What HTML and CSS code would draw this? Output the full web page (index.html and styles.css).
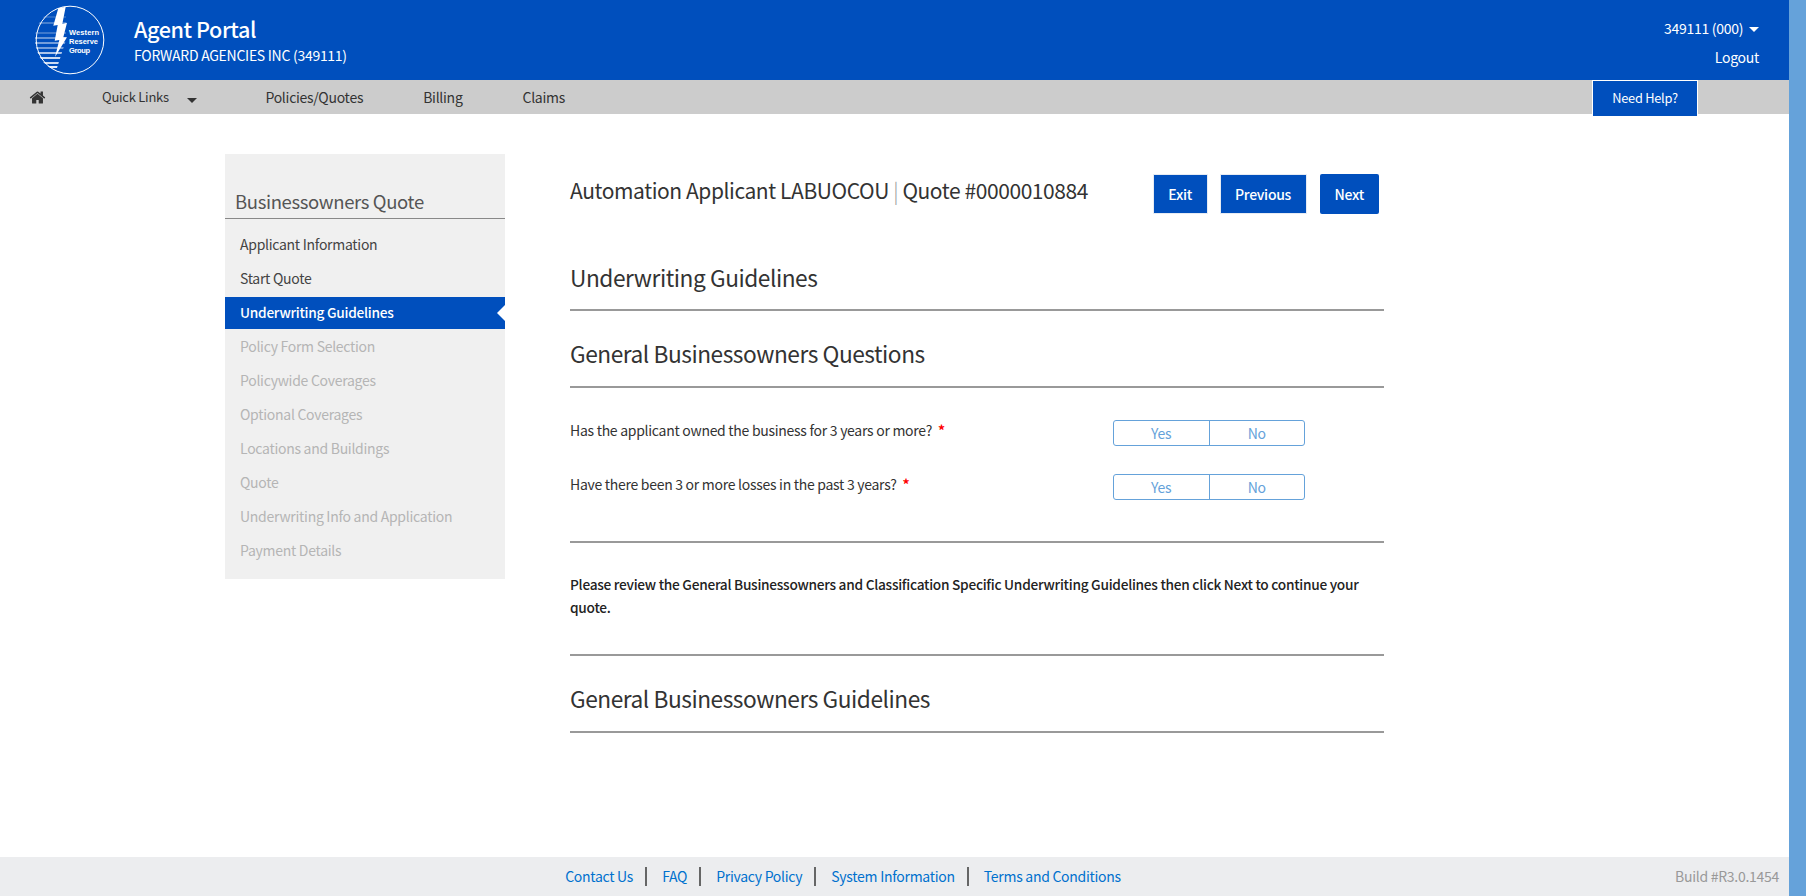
FILE: index.html
```html
<!DOCTYPE html>
<html>
	<head>
		<title>Agent Portal</title>
		<link rel="stylesheet" href="styles.css">
	</head>
	<body>
	<div class="pageMain">
		<div class="topBar">
			<svg class="logo" viewBox="0 0 70 70" width="70" height="70">
				<defs>
					<clipPath id="logoLeft"><path d="M28 1 A34 34 0 0 0 21 66 L31 35 L31 1 Z" /></clipPath>
				</defs>
				<g clip-path="url(#logoLeft)" stroke="#fff">
					<line x1="0" y1="12" x2="40" y2="12" stroke-width=".6" stroke-opacity=".5" />
					<line x1="0" y1="18" x2="40" y2="18" stroke-width=".8" stroke-opacity=".7" />
					<line x1="0" y1="28" x2="40" y2="28" stroke-width=".8" stroke-opacity=".6" />
					<line x1="0" y1="33" x2="40" y2="33" stroke-width="1" stroke-opacity=".8" />
					<line x1="0" y1="38" x2="40" y2="38" stroke-width="1" stroke-opacity=".9" />
					<line x1="0" y1="43" x2="40" y2="43" stroke-width="1.200" stroke-opacity=".9" />
					<line x1="0" y1="48" x2="40" y2="48" stroke-width="1.400" stroke-opacity=".9" />
					<line x1="0" y1="53" x2="40" y2="53" stroke-width="1.800" stroke-opacity=".8" />
					<line x1="0" y1="58" x2="40" y2="58" stroke-width="2" stroke-opacity=".8" />
					<line x1="0" y1="62" x2="40" y2="62" stroke-width="2.200" stroke-opacity=".9" />
				</g>
				<circle cx="35" cy="35" r="33.800" fill="none" stroke="#fff" stroke-width="1" />
				<path d="M23.300 3.300 L30.700 1.700 L27.300 19 L32 17.700 L28.300 32.300 L32 32.300 L20 52 L24.300 35 L19.700 35.700 L22.700 20 L18.300 20.700 Z" fill="#fff" />
				<g fill="#fff" font-size="7.500" font-weight="700">
					<text x="34" y="30" textLength="30">Western</text>
					<text x="34" y="39" textLength="29">Reserve</text>
					<text x="34" y="48" textLength="21">Group</text>
				</g>
			</svg>
			<div class="portalName">
				<div class="portalTitle">Agent Portal</div>
				<div class="portalAgency">FORWARD AGENCIES INC (349111)</div>
			</div>
			<div class="userBox">
				<div>349111 (000) <span class="caret caretWhite"></span></div>
				<div class="logoutLink">Logout</div>
			</div>
		</div>
		<div class="navBar">
			<svg class="homeIcon" viewBox="0 0 1792 1792" width="17" height="17"><path fill="#333" d="M1472 992v480q0 26-19 45t-45 19h-384v-384h-256v384h-384q-26 0-45-19t-19-45v-480q0-1 .5-3t.5-3l575-474 575 474q1 2 1 6zm223-69l-62 74q-8 9-21 11h-3q-13 0-21-7l-692-577-692 577q-12 8-24 7-13-2-21-11l-62-74q-8-10-7-23.5t11-21.5l719-599q32-26 76-26t76 26l244 204v-195q0-14 9-23t23-9h192q14 0 23 9t9 23v408l219 182q10 8 11 21.5t-7 23.5z" /></svg>
			<span class="navItem navQuick">Quick Links <span class="caret caretDark"></span></span>
			<span class="navItem">Policies/Quotes</span>
			<span class="navItem">Billing</span>
			<span class="navItem">Claims</span>
			<span class="helpBtn">Need Help?</span>
		</div>
		<div class="content">
			<div class="sideMenu">
				<div class="sideTitle">Businessowners Quote</div>
				<div class="sideItem">Applicant Information</div>
				<div class="sideItem">Start Quote</div>
				<div class="sideItem sideActive">Underwriting Guidelines</div>
				<div class="sideItem sideOff">Policy Form Selection</div>
				<div class="sideItem sideOff">Policywide Coverages</div>
				<div class="sideItem sideOff">Optional Coverages</div>
				<div class="sideItem sideOff">Locations and Buildings</div>
				<div class="sideItem sideOff">Quote</div>
				<div class="sideItem sideOff">Underwriting Info and Application</div>
				<div class="sideItem sideOff">Payment Details</div>
			</div>
			<div class="mainCol">
				<div class="quoteHead">
					<div class="quoteTitle">Automation Applicant LABUOCOU <span class="pipe">|</span> Quote #0000010884</div>
					<div class="quoteBtns">
						<span class="btn btnFlat">Exit</span>
						<span class="btn btnFlat">Previous</span>
						<span class="btn btnNext">Next</span>
					</div>
				</div>
				<h2 class="section sectionFirst">Underwriting Guidelines</h2>
				<h2 class="section">General Businessowners Questions</h2>
				<div class="questions">
					<div class="question">
						<div class="questionText">Has the applicant owned the business for 3 years or more? <span class="req">*</span></div>
						<div class="toggle"><span>Yes</span><span>No</span></div>
					</div>
					<div class="question">
						<div class="questionText">Have there been 3 or more losses in the past 3 years? <span class="req">*</span></div>
						<div class="toggle"><span>Yes</span><span>No</span></div>
					</div>
				</div>
				<div class="notice">Please review the General Businessowners and Classification Specific Underwriting Guidelines then click Next to continue your quote.</div>
				<h2 class="section">General Businessowners Guidelines</h2>
			</div>
		</div>
		<div class="footer">
			<a>Contact Us</a><a>FAQ</a><a>Privacy Policy</a><a>System Information</a><a>Terms and Conditions</a>
			<span class="build">Build #R3.0.1454</span>
		</div>
	</div>
	<div class="sideStrip"></div>
	</body>
</html>
```
FILE: styles.css
```css
*{letter-spacing:-.02em;}
html,body{margin:0; padding:0;}
body{font-family:"Noto Sans CJK SC","Noto Sans",sans-serif; font-size:14px; color:#333; display:flex; height:896px; overflow:hidden;}

.pageMain{flex:1; min-width:0; display:flex; flex-direction:column;}
.sideStrip{width:17px; background:#65a2da;}

.topBar{height:80px; background:#004fbd; color:#fff; display:flex; align-items:center; padding-left:35px; padding-right:30px;}
.logo{margin-right:29px;}
.logo text{font-family:"Liberation Sans",sans-serif; letter-spacing:0;}
.portalName{flex:1;}
.portalTitle{font-size:21.600px; font-weight:500; line-height:30px;}
.portalAgency{font-size:14px; line-height:22px;}
.userBox{text-align:right; font-size:14px; line-height:29px; margin-top:6px;}
.caret{display:inline-block; width:0; height:0; border-left:5px solid transparent; border-right:5px solid transparent; vertical-align:2px; margin-left:3px;}
.caretWhite{border-top:5px solid #fff;}
.caretDark{border-top:5px solid #333; margin-left:16px; vertical-align:-1px;}

.navBar{height:34px; background:#ccc; display:flex; align-items:center; padding-left:29px; font-size:14px; position:relative;}
.homeIcon{margin-right:56px;}
.navItem{margin-right:60px;}
.navQuick{margin-right:68px; font-size:13px; margin-top:-2px;}
.helpBtn{position:absolute; left:1592px; top:0; width:104px; height:35px; background:#004fbd; color:#fff; border:1px solid #fff; border-bottom:none; text-align:center; line-height:34px; font-size:12.800px;}

.content{flex:1; display:flex; align-items:flex-start; padding:40px 0 0 225px;}
.sideMenu{width:280px; height:425px; background:#f0f0f0; flex:none;}
.sideTitle{font-size:18.500px; color:#555; padding:33px 0 0 10px; height:31px; line-height:28px; border-bottom:1px solid #888; margin-bottom:10px;}
.sideItem{height:34px; line-height:31px; padding-left:15px; color:#444;}
.sideOff{color:#b5b5b5; line-height:33px;}
.sideActive{height:32px; line-height:31px; margin-bottom:1px; background:#004fbd; color:#fff; font-weight:500; font-size:13.700px; position:relative;}
.sideActive:after{content:""; position:absolute; right:0; top:8px; border-top:8px solid transparent; border-bottom:8px solid transparent; border-right:8px solid #fff;}

.mainCol{width:814px; margin-left:65px;}
.quoteHead{display:flex; justify-content:space-between; height:108px;}
.quoteTitle{font-size:21px; line-height:30px; margin-top:21px;}
.pipe{color:#999; font-weight:300;}
.quoteBtns{display:flex; gap:14px; margin:20px 5px 0 0; align-items:flex-start;}
.btn{background:#004fbd; color:#fff; font-weight:500; font-size:14px; line-height:38px; height:38px; padding:0 15px; text-align:center;}
.btnFlat{margin-top:1px; padding:0 14.500px; box-shadow:0 0 0 1px #e6ebf3;}
.btnNext{height:40px; line-height:40px; border-radius:2px;}

.section{font-size:22.700px; font-weight:400; line-height:32px; color:#333; margin:0; padding:27px 0 16px 0; border-bottom:2px solid #999;}
.sectionFirst{padding:0 0 15px 0;}
.questions{padding-top:32px;}
.question{display:flex; height:54px; align-items:flex-start;}
.questionText{width:543px; line-height:21px;}
.req{color:#f00; font-weight:700; margin-left:3px;}
.toggle{display:flex; width:192px; height:26px; box-sizing:border-box; border:1px solid #65a2da; border-radius:3px; color:#65a2da; line-height:24px; text-align:center;}
.toggle span{flex:1;}
.toggle span:first-child{border-right:1px solid #65a2da;}
.notice{font-weight:500; font-size:13.700px; line-height:23px; margin-top:13px; border-top:2px solid #999; border-bottom:2px solid #999; padding:30px 0 35px 0; color:#222;}

.footer{height:39px; background:#ecedef; display:flex; justify-content:center; align-items:center; position:relative; padding-right:106px;}
.footer a{color:#0071ce; padding:0 12px 0 15px; border-left:2px solid #666; line-height:19px;}
.footer a:first-child{border-left:none;}
.build{position:absolute; right:10px; color:#999; top:9px;}
```
